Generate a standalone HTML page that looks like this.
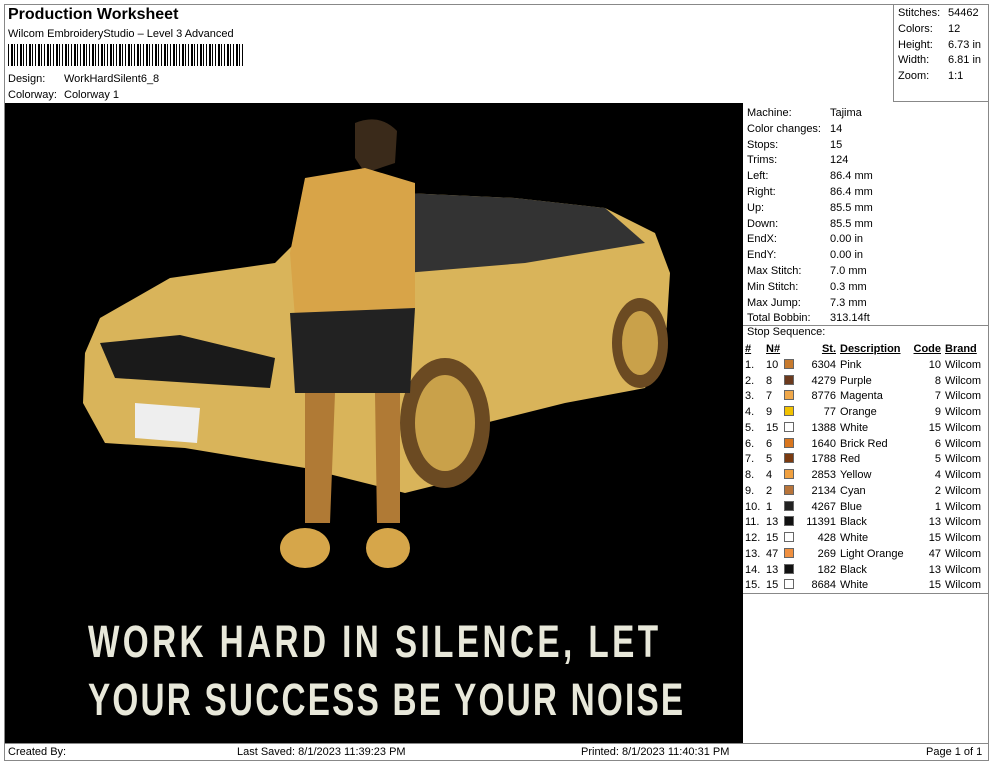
<!DOCTYPE html>
<html><head><style>
*{margin:0;padding:0;box-sizing:border-box}
body{width:990px;height:762px;background:#fff;font-family:"Liberation Sans",Arial,sans-serif;font-size:11px;color:#000;position:relative;overflow:hidden}
.a{position:absolute;white-space:nowrap}
.b{position:absolute;border:1px solid #888}
.sw{display:inline-block;width:10px;height:10px;border:1px solid #666;vertical-align:-1px}
</style></head><body>
<div class="b" style="left:4px;top:4px;width:985px;height:757px"></div>
<div class="b" style="left:893px;top:4px;width:96px;height:98px"></div>
<div class="a" style="left:8px;top:6px;font-size:16px;font-weight:bold">Production Worksheet</div>
<div class="a" style="left:8px;top:28px">Wilcom EmbroideryStudio – Level 3 Advanced</div>
<div class="a" style="left:8px;top:44px;width:236px;height:22px;background:repeating-linear-gradient(90deg,#000 0 1px,#fff 1px 3px,#000 3px 5px,#fff 5px 6px,#000 6px 7px,#fff 7px 9px)"></div>
<div class="a" style="left:8px;top:73px">Design:</div><div class="a" style="left:64px;top:73px">WorkHardSilent6_8</div>
<div class="a" style="left:8px;top:89px">Colorway:</div><div class="a" style="left:64px;top:89px">Colorway 1</div>
<div class="a" style="left:898px;top:6px;line-height:15.8px">Stitches:<br>Colors:<br>Height:<br>Width:<br>Zoom:</div>
<div class="a" style="left:948px;top:6px;line-height:15.8px">54462<br>12<br>6.73 in<br>6.81 in<br>1:1</div>

<div class="a" style="left:5px;top:103px;width:738px;height:640px;background:#000;overflow:hidden">
<svg width="738" height="640" viewBox="0 0 738 640">
<path d="M80 250 L95 215 L165 175 L270 160 L330 100 L400 90 L510 95 L600 105 L650 130 L665 170 L660 250 L640 285 L560 300 L480 320 L440 380 L400 390 L300 365 L180 345 L100 340 L78 300Z" fill="#d9b45a"/>
<path d="M330 100 L400 90 L510 95 L600 105 L640 140 L520 160 L400 170 L340 160Z" fill="#333"/>
<path d="M95 240 L175 232 L270 255 L265 285 L110 275Z" fill="#1a1a1a"/>
<path d="M130 300 L195 305 L192 340 L130 335Z" fill="#eee"/>
<ellipse cx="440" cy="320" rx="45" ry="65" fill="#6b4a22"/><ellipse cx="440" cy="320" rx="30" ry="48" fill="#c9a14a"/>
<ellipse cx="635" cy="240" rx="28" ry="45" fill="#6b4a22"/><ellipse cx="635" cy="240" rx="18" ry="32" fill="#c9a14a"/>
<path d="M350 20 Q375 10 392 28 L390 60 L360 70 L350 55Z" fill="#3a2a1a"/>
<path d="M300 75 L360 65 L410 80 L410 210 L290 215 L285 150Z" fill="#d8a448"/>
<path d="M285 210 L410 205 L405 290 L290 290Z" fill="#222"/>
<path d="M300 290 L330 290 L325 420 L300 420Z M370 290 L395 290 L395 420 L372 420Z" fill="#b07a35"/>
<ellipse cx="300" cy="445" rx="25" ry="20" fill="#d6a64a"/><ellipse cx="383" cy="445" rx="22" ry="20" fill="#d6a64a"/>
</svg>
<div class="a" style="left:-13px;width:738px;top:510px;text-align:center;color:#e8e8da;font-weight:bold;font-size:45px;line-height:58px;letter-spacing:3px;transform:scaleX(0.74)"><span style="letter-spacing:4.6px">WORK HARD IN SILENCE, LET</span><br>YOUR SUCCESS BE YOUR NOISE</div>
</div>

<div class="a" style="left:747px;top:106px;line-height:15.8px">Machine:<br>Color changes:<br>Stops:<br>Trims:<br>Left:<br>Right:<br>Up:<br>Down:<br>EndX:<br>EndY:<br>Max Stitch:<br>Min Stitch:<br>Max Jump:<br>Total Bobbin:</div>
<div class="a" style="left:830px;top:106px;line-height:15.8px">Tajima<br>14<br>15<br>124<br>86.4 mm<br>86.4 mm<br>85.5 mm<br>85.5 mm<br>0.00 in<br>0.00 in<br>7.0 mm<br>0.3 mm<br>7.3 mm<br>313.14ft</div>
<div class="a" style="left:743px;top:325px;width:246px;border-top:1px solid #888"></div>
<div class="a" style="left:747px;top:326px">Stop Sequence:</div>
<div class="a" style="left:743px;top:593px;width:246px;border-top:1px solid #888"></div>
<table class="a" style="left:745px;top:342px;border-collapse:collapse;font-size:11px;line-height:15.75px">
<tr style="font-weight:bold;text-decoration:underline"><td style="width:21px">#</td><td style="width:18px">N#</td><td style="width:14px"></td><td style="width:38px;text-align:right">St.</td><td style="width:70px;padding-left:4px">Description</td><td style="width:35px;text-align:right">Code</td><td style="padding-left:4px">Brand</td></tr>
<tr><td>1.</td><td>10</td><td><span class="sw" style="background:#c77a2e"></span></td><td align=right>6304</td><td style="padding-left:4px">Pink</td><td align=right>10</td><td style="padding-left:4px">Wilcom</td></tr>
<tr><td>2.</td><td>8</td><td><span class="sw" style="background:#6b3a1e"></span></td><td align=right>4279</td><td style="padding-left:4px">Purple</td><td align=right>8</td><td style="padding-left:4px">Wilcom</td></tr>
<tr><td>3.</td><td>7</td><td><span class="sw" style="background:#f0a84a"></span></td><td align=right>8776</td><td style="padding-left:4px">Magenta</td><td align=right>7</td><td style="padding-left:4px">Wilcom</td></tr>
<tr><td>4.</td><td>9</td><td><span class="sw" style="background:#f2c200"></span></td><td align=right>77</td><td style="padding-left:4px">Orange</td><td align=right>9</td><td style="padding-left:4px">Wilcom</td></tr>
<tr><td>5.</td><td>15</td><td><span class="sw" style="background:#fff"></span></td><td align=right>1388</td><td style="padding-left:4px">White</td><td align=right>15</td><td style="padding-left:4px">Wilcom</td></tr>
<tr><td>6.</td><td>6</td><td><span class="sw" style="background:#d9761e"></span></td><td align=right>1640</td><td style="padding-left:4px">Brick Red</td><td align=right>6</td><td style="padding-left:4px">Wilcom</td></tr>
<tr><td>7.</td><td>5</td><td><span class="sw" style="background:#7a3a10"></span></td><td align=right>1788</td><td style="padding-left:4px">Red</td><td align=right>5</td><td style="padding-left:4px">Wilcom</td></tr>
<tr><td>8.</td><td>4</td><td><span class="sw" style="background:#f0a040"></span></td><td align=right>2853</td><td style="padding-left:4px">Yellow</td><td align=right>4</td><td style="padding-left:4px">Wilcom</td></tr>
<tr><td>9.</td><td>2</td><td><span class="sw" style="background:#b8743a"></span></td><td align=right>2134</td><td style="padding-left:4px">Cyan</td><td align=right>2</td><td style="padding-left:4px">Wilcom</td></tr>
<tr><td>10.</td><td>1</td><td><span class="sw" style="background:#222"></span></td><td align=right>4267</td><td style="padding-left:4px">Blue</td><td align=right>1</td><td style="padding-left:4px">Wilcom</td></tr>
<tr><td>11.</td><td>13</td><td><span class="sw" style="background:#111"></span></td><td align=right>11391</td><td style="padding-left:4px">Black</td><td align=right>13</td><td style="padding-left:4px">Wilcom</td></tr>
<tr><td>12.</td><td>15</td><td><span class="sw" style="background:#fff"></span></td><td align=right>428</td><td style="padding-left:4px">White</td><td align=right>15</td><td style="padding-left:4px">Wilcom</td></tr>
<tr><td>13.</td><td>47</td><td><span class="sw" style="background:#f09040"></span></td><td align=right>269</td><td style="padding-left:4px">Light Orange</td><td align=right>47</td><td style="padding-left:4px">Wilcom</td></tr>
<tr><td>14.</td><td>13</td><td><span class="sw" style="background:#111"></span></td><td align=right>182</td><td style="padding-left:4px">Black</td><td align=right>13</td><td style="padding-left:4px">Wilcom</td></tr>
<tr><td>15.</td><td>15</td><td><span class="sw" style="background:#fff"></span></td><td align=right>8684</td><td style="padding-left:4px">White</td><td align=right>15</td><td style="padding-left:4px">Wilcom</td></tr>
</table>
<div class="a" style="left:4px;top:743px;width:985px;border-top:1px solid #888"></div>
<div class="a" style="left:8px;top:746px">Created By:</div>
<div class="a" style="left:237px;top:746px">Last Saved: 8/1/2023 11:39:23 PM</div>
<div class="a" style="left:581px;top:746px">Printed: 8/1/2023 11:40:31 PM</div>
<div class="a" style="left:926px;top:746px">Page 1 of 1</div>
</body></html>
